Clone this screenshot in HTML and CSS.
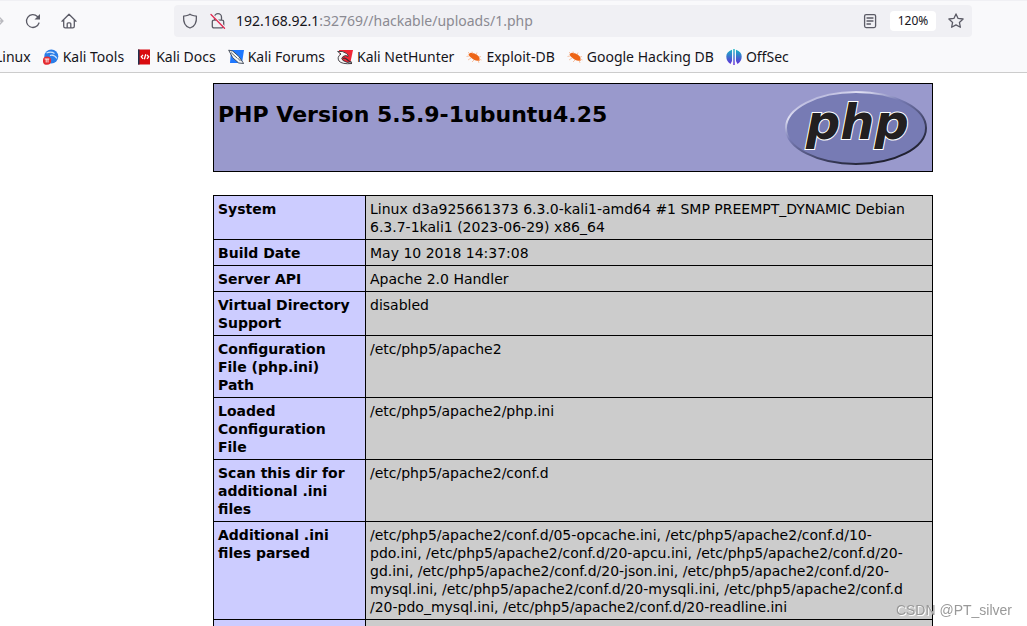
FILE: index.html
```html
<!DOCTYPE html>
<html lang="en">
<head>
<meta charset="utf-8">
<title>phpinfo()</title>
<link rel="stylesheet" href="styles.css">
</head>
<body>
<header class="browser">
  <div class="toolbar">
    <div class="nav-buttons">
      <button class="icon-button forward" type="button" aria-label="Forward">
        <svg width="16" height="16" viewBox="0 0 16 16"><path d="M1 8h13M9 3l5 5-5 5"/></svg>
      </button>
      <button class="icon-button" type="button" aria-label="Reload">
        <svg width="16" height="16" viewBox="0 0 16 16"><path d="M14 10A6.4 6.4 0 1 1 12.4 3.5L14 5.2"/><path class="solid" d="M15 1v5.5H9.5z"/></svg>
      </button>
      <button class="icon-button" type="button" aria-label="Home">
        <svg width="16" height="16" viewBox="0 0 16 16"><path d="M1 8.2L8 1.3l7 6.9M2.7 7v6.2q0 1.6 1.6 1.6h7.4q1.6 0 1.6-1.6V7M6.2 14.8v-4q0-1 1-1h1.6q1 0 1 1v4"/></svg>
      </button>
    </div>
    <div class="address-bar">
      <button class="icon-button" type="button" aria-label="Tracking protection">
        <svg width="16" height="16" viewBox="0 0 16 16"><path d="M8 1.2Q9 2.5 14.4 3.2C14.8 9 13 13.5 8 15C3 13.5 1.2 9 1.6 3.2Q7 2.5 8 1.2z"/></svg>
      </button>
      <button class="icon-button" type="button" aria-label="Connection not secure">
        <svg width="16" height="16" viewBox="0 0 16 16"><path d="M4.5 7V4.200a3.500 3.500 0 0 1 7 0V7M4 7.200h8q1.700 0 1.700 1.500v4.600q0 1.500-1.700 1.500H4q-1.700 0-1.700-1.500V8.700q0-1.500 1.700-1.500z"/><path class="slash-gap" d="M1.800 1.200l13.200 13.600"/><path class="slash" d="M1 1.500l13.500 13.700"/></svg>
      </button>
      <div class="url"><span class="host">192.168.92.1</span>:32769//hackable/uploads/1.php</div>
      <div class="page-actions">
        <button class="icon-button" type="button" aria-label="Reader view">
          <svg width="16" height="16" viewBox="0 0 16 16"><rect x="2.600" y="1.600" width="11" height="13" rx="1.500"/><path d="M5 5h6M5 8h6M5 11h3.500"/></svg>
        </button>
        <button class="zoom-level" type="button">120%</button>
        <button class="icon-button" type="button" aria-label="Bookmark this page">
          <svg width="16" height="16" viewBox="0 0 16 16"><path d="M8 .9l2.100 4.500 5 .6-3.700 3.400 1 4.900L8 11.900l-4.400 2.400 1-4.900L.9 6l5-.6z"/></svg>
        </button>
      </div>
    </div>
  </div>
  <nav class="bookmarks">
    <a class="bookmark cut" href="#">Linux</a>
    <a class="bookmark" href="#">
      <svg width="16" height="16" viewBox="0 0 16 16"><circle cx="8.300" cy="7.500" r="7" fill="#2a7de8"/><path d="M3.500 4Q8 2 11.500 4.500M7 6.500q4-1.500 7 3" fill="none" stroke="#cfe3fb" stroke-width="1.100"/><circle cx="4" cy="11.700" r="4.100" fill="#e52b31"/><path d="M1.700 10h4.600M3.200 10v3.500M5 10v3.500" stroke="#fff" fill="none" stroke-width=".9"/></svg>
      Kali Tools</a>
    <a class="bookmark" href="#">
      <svg width="16" height="16" viewBox="0 0 16 16"><path fill="#d90b10" d="M2 .5h12v15H2z"/><path fill="#20314f" d="M2 .5h1.500v15H2z"/><path d="M7 5.800L5.300 7.800 7 9.800M11 5.800l1.700 2-1.700 2M9.800 5.300l-1.500 5" fill="none" stroke="#fff" stroke-width="1.300"/></svg>
      Kali Docs</a>
    <a class="bookmark" href="#">
      <svg width="16" height="16" viewBox="0 0 16 16"><path fill="#1f78ff" d="M3 1h13l-2 13H2z"/><path d="M.7 1.200l4 .8 6 5.300 5 7.200-5-.5-6-5.300z" fill="#f5f7f9" stroke="#39414e" stroke-width=".9"/><path d="M3 3.500l6 5.500M9.500 9l3 3" stroke="#5c6570" fill="none"/></svg>
      Kali Forums</a>
    <a class="bookmark" href="#">
      <svg width="16" height="16" viewBox="0 0 16 16"><path fill="#f02636" d="M2 1h14l-2.500 12H4z"/><path d="M.6 2.500q5-1 9 2 2 1.500 1.500 3Q9 5.500 6 7.500q-2.500 2 0 4 3 2 9 3-10 1-13-2.500-2.500-4 2-7z" fill="#f7f7f7" stroke="#39343a" stroke-width=".9"/><path d="M6 9.500q2-1 4 1t5 3" stroke="#39343a" fill="none" stroke-width="1.200"/></svg>
      Kali NetHunter</a>
    <a class="bookmark" href="#">
      <svg width="16" height="16" viewBox="0 0 16 16"><path fill="#ee6516" d="M2.500 5q2-2 6-.5t5 4.500v3q-5 0-8-3-3-2-3-4z"/><path d="M4 5L2 3M7 5L6 2.500M10 6l1-2.500M13 8l2-.5M3 7L.5 7.500M5 9l-3 2M8 11l-2 2M12 11l1 3M13 10l2.500 1" stroke="#f6ad82" stroke-width=".7" fill="none"/></svg>
      Exploit-DB</a>
    <a class="bookmark" href="#">
      <svg width="16" height="16" viewBox="0 0 16 16"><path fill="#ee6516" d="M2.500 5q2-2 6-.5t5 4.500v3q-5 0-8-3-3-2-3-4z"/><path d="M4 5L2 3M7 5L6 2.500M10 6l1-2.500M13 8l2-.5M3 7L.5 7.500M5 9l-3 2M8 11l-2 2M12 11l1 3M13 10l2.500 1" stroke="#f6ad82" stroke-width=".7" fill="none"/></svg>
      Google Hacking DB</a>
    <a class="bookmark" href="#">
      <svg width="16" height="16" viewBox="0 0 16 16"><defs><linearGradient id="offsec" gradientUnits="userSpaceOnUse" x1="0" y1="0" x2="0" y2="16"><stop stop-color="#16b9c4"/><stop offset="1" stop-color="#6426d9"/></linearGradient></defs><path fill="url(#offsec)" d="M7.300 0h1.400v16H7.300zM6 .8V12L4.500 15 Q.3 12 .3 7.500T6 .8zM10 .8V12l1.500 3q4.200-3 4.200-7.500T10 .8z"/></svg>
      OffSec</a>
  </nav>
</header>
<main class="page">
  <section class="banner">
    <h1 class="version">PHP Version 5.5.9-1ubuntu4.25</h1>
    <svg class="php-logo" width="144" height="80" viewBox="0 0 144 80" role="img" aria-label="PHP logo">
      <defs><linearGradient id="rim" x1=".15" y1="0" x2=".85" y2="1"><stop stop-color="#9999cc"/><stop offset=".18" stop-color="#e1e1f3"/><stop offset=".38" stop-color="#777bb4"/><stop offset=".75" stop-color="#333551"/><stop offset="1" stop-color="#15151d"/></linearGradient></defs>
      <ellipse cx="72" cy="40" rx="70" ry="36" fill="#777bb4" stroke="url(#rim)" stroke-width="2"/>
      <text class="logo-text" x="22" y="51">php</text>
    </svg>
  </section>
  <table class="info">
    <tbody>
      <tr><th scope="row">System</th><td>Linux d3a925661373 6.3.0-kali1-amd64 #1 SMP PREEMPT_DYNAMIC Debian<br>6.3.7-1kali1 (2023-06-29) x86_64</td></tr>
      <tr><th scope="row">Build Date</th><td>May 10 2018 14:37:08</td></tr>
      <tr><th scope="row">Server API</th><td>Apache 2.0 Handler</td></tr>
      <tr><th scope="row">Virtual Directory Support</th><td>disabled</td></tr>
      <tr><th scope="row">Configuration<br>File (php.ini)<br>Path</th><td>/etc/php5/apache2</td></tr>
      <tr><th scope="row">Loaded<br>Configuration<br>File</th><td>/etc/php5/apache2/php.ini</td></tr>
      <tr><th scope="row">Scan this dir for additional .ini files</th><td>/etc/php5/apache2/conf.d</td></tr>
      <tr><th scope="row">Additional .ini files parsed</th><td>/etc/php5/apache2/conf.d/05-opcache.ini, /etc/php5/apache2/conf.d/10-<br>pdo.ini, /etc/php5/apache2/conf.d/20-apcu.ini, /etc/php5/apache2/conf.d/20-<br>gd.ini, /etc/php5/apache2/conf.d/20-json.ini, /etc/php5/apache2/conf.d/20-<br>mysql.ini, /etc/php5/apache2/conf.d/20-mysqli.ini, /etc/php5/apache2/conf.d<br>/20-pdo_mysql.ini, /etc/php5/apache2/conf.d/20-readline.ini</td></tr>
      <tr><th></th><td></td></tr>
    </tbody>
  </table>
</main>
<div class="watermark">CSDN @PT_silver</div>
</body>
</html>
```
FILE: styles.css
```css
* { box-sizing: border-box; }
html, body { height: 100%; }
body {
  margin: 0;
  display: flex;
  flex-direction: column;
  overflow: hidden;
  background: #fff;
  color: #000;
  font-family: "DejaVu Sans", sans-serif;
  font-size: 14px;
  line-height: 18px;
}
button { border: 0; padding: 0; background: none; font: inherit; color: inherit; }

.browser {
  flex: none;
  background: #f9f9fb;
  border-top: 1px solid #f0f0f4;
  border-bottom: 1px solid #ccc;
  color: #15141a;
  font-family: "Noto Sans", sans-serif;
}
.toolbar { display: flex; padding: 4px 55px 4px 0; }
.nav-buttons { flex: none; width: 174px; display: flex; align-items: center; gap: 20px; margin-left: -11px; margin-right: 11px; }
.icon-button { flex: none; display: flex; }
.icon-button svg { fill: none; stroke: #5b5b66; stroke-width: 1.3; stroke-linejoin: round; stroke-linecap: round; }
.icon-button .solid { fill: #5b5b66; stroke: none; }
.icon-button .slash-gap { stroke: #f0f0f4; stroke-width: 2; }
.icon-button .slash { stroke: #e22850; }
.forward { opacity: .4; }
.address-bar {
  flex: 1;
  min-width: 0;
  height: 32px;
  display: flex;
  align-items: center;
  gap: 12px;
  padding: 0 8px;
  border-radius: 4px;
  background: #f0f0f4;
}
.url { flex: 1; min-width: 0; white-space: nowrap; color: #8b8a92; font-size: 14px; line-height: 20px; margin-left: -2px; }
.host { color: #15141a; }
.page-actions { display: flex; align-items: center; gap: 12px; }
.zoom-level { width: 46px; height: 20px; border-radius: 4px; background: #fff; font-size: 12px; }
.bookmarks { display: flex; gap: 12px; padding: 6px 0; height: 31px; white-space: nowrap; }
.bookmark { display: flex; align-items: center; gap: 4px; color: inherit; text-decoration: none; }
.cut { margin-left: -5px; }

.page { flex: 1; min-height: 0; overflow: hidden; padding: 10px 0 0 119px; }
.banner {
  max-width: 720px;
  margin: 0 auto 23px;
  padding: 4px 4px 3px;
  display: flex;
  justify-content: space-between;
  border: 1px solid #000;
  background: #9999cc;
}
.version { margin: 14px 0 0; font-size: 22px; line-height: 26px; }
.php-logo { flex: none; }
.logo-text {
  font-family: "DejaVu Sans", sans-serif;
  font-size: 48px;
  font-weight: bold;
  font-style: italic;
  fill: #231f20;
  stroke: #fff;
  stroke-width: 2px;
  paint-order: stroke;
}
.info { width: 100%; max-width: 720px; margin: 0 auto; border-collapse: collapse; }
.info th, .info td { padding: 4px 4px 3px; border: 1px solid #000; text-align: left; vertical-align: top; }
.info th { width: 152px; background: #ccccff; }
.info td { background: #ccc; }
.info tr:last-child th { height: 26px; }

.watermark {
  position: fixed;
  right: 15px;
  bottom: 7px;
  color: #999;
  font-family: "Liberation Sans", sans-serif;
  text-shadow: 1px 1px 0 #fff;
}
```
